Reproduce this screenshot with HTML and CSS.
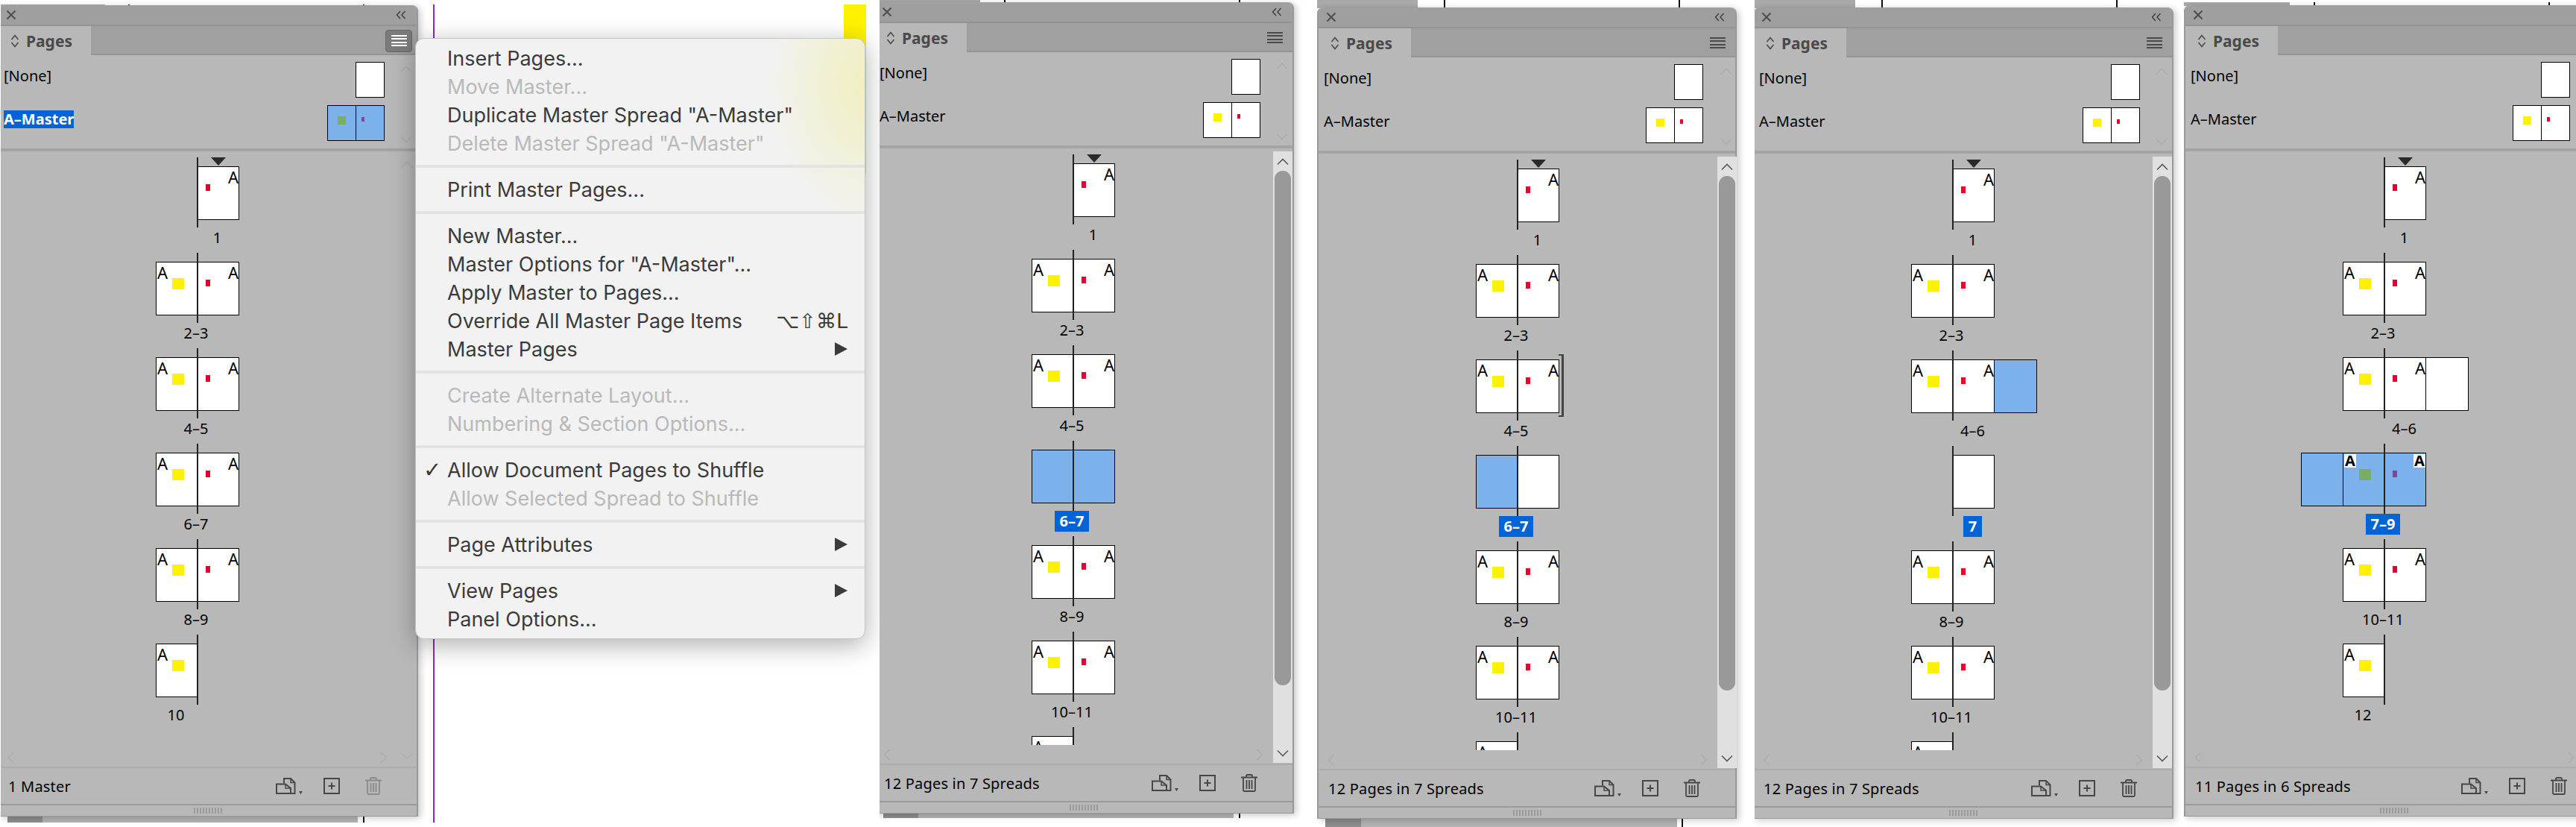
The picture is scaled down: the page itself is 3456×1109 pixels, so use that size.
FILE: index.html
```html
<!DOCTYPE html>
<html>
<head>
  <meta charset="utf-8" />
  <title>Pages panel</title>
  <link rel="stylesheet" href="styles.css">
</head>
<body>
  <svg class="sprite" xmlns="http://www.w3.org/2000/svg">
    <symbol id="i-close" viewBox="0 0 14 14"><path d="M1.5 1.5 12.5 12.5M12.5 1.5 1.5 12.5" fill="none" stroke="currentColor" stroke-width="2"/></symbol>
    <symbol id="i-collapse" viewBox="0 0 14 12"><path d="M6 1 1.500 6 6 11M12.500 1 8 6 12.500 11" fill="none" stroke="currentColor" stroke-width="1.400"/></symbol>
    <symbol id="i-updown" viewBox="0 0 12 18"><path d="M1.500 7 6 1.500 10.500 7M1.500 11 6 16.500 10.500 11" fill="none" stroke="currentColor" stroke-width="1.600"/></symbol>
    <symbol id="i-up" viewBox="0 0 16 10"><path d="M1 8.500 8 1.500 15 8.500" fill="none" stroke="currentColor" stroke-width="1.600"/></symbol>
    <symbol id="i-down" viewBox="0 0 16 10"><path d="M1 1.500 8 8.500 15 1.500" fill="none" stroke="currentColor" stroke-width="1.600"/></symbol>
    <symbol id="i-left" viewBox="0 0 10 16"><path d="M8.500 1 1.500 8 8.500 15" fill="none" stroke="currentColor" stroke-width="1.600"/></symbol>
    <symbol id="i-right" viewBox="0 0 10 16"><path d="M1.500 1 8.500 8 1.500 15" fill="none" stroke="currentColor" stroke-width="1.600"/></symbol>
    <symbol id="i-dup" viewBox="0 0 36 22">
      <path d="M11 7.500V1H20L25.500 6.500V21H20" fill="none" stroke="currentColor" stroke-width="2"/>
      <path d="M20 1V6.500H25.500" fill="none" stroke="currentColor" stroke-width="1.500"/>
      <path d="M1 8.500H13L20 14V21H1Z" fill="none" stroke="currentColor" stroke-width="2"/>
      <path d="M13 8.500V14H20" fill="none" stroke="currentColor" stroke-width="1.500"/>
      <path d="M31 18H36L33.500 22Z" fill="currentColor"/>
    </symbol>
    <symbol id="i-new" viewBox="0 0 22 22">
      <rect x="1" y="1" width="20" height="20" fill="none" stroke="currentColor" stroke-width="2"/>
      <path d="M11 6.500V15.500M6.500 11H15.500" fill="none" stroke="currentColor" stroke-width="2"/>
    </symbol>
    <symbol id="i-trash" viewBox="0 0 22 24">
      <path d="M0 4.500H22M7 4V2.500Q7 1 8.500 1H13.500Q15 1 15 2.500V4M3 5V21.500Q3 23 4.500 23H17.500Q19 23 19 21.500V5M7.500 8V20M11 8V20M14.500 8V20" fill="none" stroke="currentColor" stroke-width="1.800"/>
    </symbol>
  </svg>

  <!-- first screenshot: panel with the flyout menu open -->
  <section class="shot shot-1">
    <i class="back-tab"></i><i class="tick tick-a"></i><i class="tick tick-b"></i>
    <i class="guide"></i><i class="swatch"></i>
    <i class="under"></i><i class="under-icon"></i><i class="under-line"></i>

    <div class="panel">
      <div class="title-bar">
        <svg class="ic-close"><use href="#i-close"/></svg>
        <svg class="ic-collapse"><use href="#i-collapse"/></svg>
      </div>
      <div class="tab-bar">
        <div class="tab"><svg class="ic-updown"><use href="#i-updown"/></svg>Pages</div>
        <div class="burger on"><i></i><i></i><i></i><i></i></div>
      </div>
      <div class="masters">
        <div class="master"><span class="name">[None]</span><div class="thumb one"></div></div>
        <div class="master"><span class="name sel">A–Master</span><div class="thumb two sel-blue"><i class="t-line"></i><i class="t-yel"></i><i class="t-red"></i></div></div>
        <svg class="fade-up"><use href="#i-up"/></svg><svg class="fade-down"><use href="#i-down"/></svg>
      </div>
      <div class="body">
        <div class="list">
          <div class="spread">
            <div class="leaves"><div class="side left"></div><i class="spine"></i><div class="side"><div class="page"><i class="current"></i><span class="tag right">A</span><i class="red"></i></div></div></div>
            <div class="label at-r"><span>1</span></div>
          </div>
          <div class="spread">
            <div class="leaves"><div class="side left"><div class="page"><span class="tag">A</span><i class="yel"></i></div></div><i class="spine"></i><div class="side"><div class="page"><span class="tag right">A</span><i class="red"></i></div></div></div>
            <div class="label at-m"><span>2–3</span></div>
          </div>
          <div class="spread">
            <div class="leaves"><div class="side left"><div class="page"><span class="tag">A</span><i class="yel"></i></div></div><i class="spine"></i><div class="side"><div class="page"><span class="tag right">A</span><i class="red"></i></div></div></div>
            <div class="label at-m"><span>4–5</span></div>
          </div>
          <div class="spread">
            <div class="leaves"><div class="side left"><div class="page"><span class="tag">A</span><i class="yel"></i></div></div><i class="spine"></i><div class="side"><div class="page"><span class="tag right">A</span><i class="red"></i></div></div></div>
            <div class="label at-m"><span>6–7</span></div>
          </div>
          <div class="spread">
            <div class="leaves"><div class="side left"><div class="page"><span class="tag">A</span><i class="yel"></i></div></div><i class="spine"></i><div class="side"><div class="page"><span class="tag right">A</span><i class="red"></i></div></div></div>
            <div class="label at-m"><span>8–9</span></div>
          </div>
          <div class="spread">
            <div class="leaves"><div class="side left"><div class="page"><span class="tag">A</span><i class="yel"></i></div></div><i class="spine"></i><div class="side"></div></div>
            <div class="label at-l"><span>10</span></div>
          </div>
        </div>
        <div class="hbar"><svg class="ic-side"><use href="#i-left"/></svg><svg class="ic-side"><use href="#i-right"/></svg></div>
        <div class="scroll idle"><svg class="ic-chev"><use href="#i-up"/></svg><svg class="ic-chev"><use href="#i-down"/></svg></div>
      </div>
      <div class="foot">
        <span class="status">1 Master</span>
        <div class="tools"><svg class="ic-dup"><use href="#i-dup"/></svg><svg class="ic-new"><use href="#i-new"/></svg><svg class="ic-trash off"><use href="#i-trash"/></svg></div>
      </div>
      <div class="grip"></div>
    </div>

    <div class="menu">
      <div class="item"><span></span><span>Insert Pages...</span></div>
      <div class="item off"><span></span><span>Move Master...</span></div>
      <div class="item"><span></span><span>Duplicate Master Spread "A-Master"</span></div>
      <div class="item off"><span></span><span>Delete Master Spread "A-Master"</span></div>
      <div class="sep"></div>
      <div class="item"><span></span><span>Print Master Pages...</span></div>
      <div class="sep"></div>
      <div class="item"><span></span><span>New Master...</span></div>
      <div class="item"><span></span><span>Master Options for "A-Master"...</span></div>
      <div class="item"><span></span><span>Apply Master to Pages...</span></div>
      <div class="item"><span></span><span>Override All Master Page Items</span><span class="keys">⌥⇧⌘L</span></div>
      <div class="item"><span></span><span>Master Pages</span><i class="arrow"></i></div>
      <div class="sep"></div>
      <div class="item off"><span></span><span>Create Alternate Layout...</span></div>
      <div class="item off"><span></span><span>Numbering &amp; Section Options...</span></div>
      <div class="sep"></div>
      <div class="item"><span class="check">✓</span><span>Allow Document Pages to Shuffle</span></div>
      <div class="item off"><span></span><span>Allow Selected Spread to Shuffle</span></div>
      <div class="sep"></div>
      <div class="item"><span></span><span>Page Attributes</span><i class="arrow"></i></div>
      <div class="sep"></div>
      <div class="item"><span></span><span>View Pages</span><i class="arrow"></i></div>
      <div class="item"><span></span><span>Panel Options...</span></div>
    </div>
  </section>

  <!-- second screenshot: spread 6-7 selected -->
  <section class="shot shot-2">
    <i class="back-tab"></i><i class="tick tick-a"></i><i class="tick tick-b"></i>
    <i class="under"></i><i class="under-icon"></i><i class="under-line"></i>
    <div class="panel">
      <div class="title-bar">
        <svg class="ic-close"><use href="#i-close"/></svg>
        <svg class="ic-collapse"><use href="#i-collapse"/></svg>
      </div>
      <div class="tab-bar">
        <div class="tab"><svg class="ic-updown"><use href="#i-updown"/></svg>Pages</div>
        <div class="burger"><i></i><i></i><i></i><i></i></div>
      </div>
      <div class="masters">
        <div class="master"><span class="name">[None]</span><div class="thumb one"></div></div>
        <div class="master"><span class="name">A–Master</span><div class="thumb two"><i class="t-line"></i><i class="t-yel"></i><i class="t-red"></i></div></div>
        <svg class="fade-up"><use href="#i-up"/></svg><svg class="fade-down"><use href="#i-down"/></svg>
      </div>
      <div class="body">
        <div class="list">
          <div class="spread">
            <div class="leaves"><div class="side left"></div><i class="spine"></i><div class="side"><div class="page"><i class="current"></i><span class="tag right">A</span><i class="red"></i></div></div></div>
            <div class="label at-r"><span>1</span></div>
          </div>
          <div class="spread">
            <div class="leaves"><div class="side left"><div class="page"><span class="tag">A</span><i class="yel"></i></div></div><i class="spine"></i><div class="side"><div class="page"><span class="tag right">A</span><i class="red"></i></div></div></div>
            <div class="label at-m"><span>2–3</span></div>
          </div>
          <div class="spread">
            <div class="leaves"><div class="side left"><div class="page"><span class="tag">A</span><i class="yel"></i></div></div><i class="spine"></i><div class="side"><div class="page"><span class="tag right">A</span><i class="red"></i></div></div></div>
            <div class="label at-m"><span>4–5</span></div>
          </div>
          <div class="spread">
            <div class="leaves"><div class="side left"><div class="page blue"></div></div><i class="spine"></i><div class="side"><div class="page blue"></div></div></div>
            <div class="label at-m"><span class="hit">6–7</span></div>
          </div>
          <div class="spread">
            <div class="leaves"><div class="side left"><div class="page"><span class="tag">A</span><i class="yel"></i></div></div><i class="spine"></i><div class="side"><div class="page"><span class="tag right">A</span><i class="red"></i></div></div></div>
            <div class="label at-m"><span>8–9</span></div>
          </div>
          <div class="spread">
            <div class="leaves"><div class="side left"><div class="page"><span class="tag">A</span><i class="yel"></i></div></div><i class="spine"></i><div class="side"><div class="page"><span class="tag right">A</span><i class="red"></i></div></div></div>
            <div class="label at-m"><span>10–11</span></div>
          </div>
          <div class="spread">
            <div class="leaves"><div class="side left"><div class="page"><span class="tag">A</span><i class="yel"></i></div></div><i class="spine"></i><div class="side"></div></div>
          </div>
        </div>
        <div class="hbar"><svg class="ic-side"><use href="#i-left"/></svg><svg class="ic-side"><use href="#i-right"/></svg></div>
        <div class="scroll"><svg class="ic-chev"><use href="#i-up"/></svg><i class="thumb-bar"></i><svg class="ic-chev"><use href="#i-down"/></svg></div>
      </div>
      <div class="foot">
        <span class="status">12 Pages in 7 Spreads</span>
        <div class="tools"><svg class="ic-dup"><use href="#i-dup"/></svg><svg class="ic-new"><use href="#i-new"/></svg><svg class="ic-trash"><use href="#i-trash"/></svg></div>
      </div>
      <div class="grip"></div>
    </div>
  </section>

  <!-- third screenshot: dragging page 6 next to 4-5 -->
  <section class="shot shot-3">
    <i class="back-tab"></i><i class="tick tick-a"></i><i class="tick tick-b"></i>
    <i class="under"></i><i class="under-icon"></i><i class="under-line"></i>
    <div class="panel">
      <div class="title-bar">
        <svg class="ic-close"><use href="#i-close"/></svg>
        <svg class="ic-collapse"><use href="#i-collapse"/></svg>
      </div>
      <div class="tab-bar">
        <div class="tab"><svg class="ic-updown"><use href="#i-updown"/></svg>Pages</div>
        <div class="burger"><i></i><i></i><i></i><i></i></div>
      </div>
      <div class="masters">
        <div class="master"><span class="name">[None]</span><div class="thumb one"></div></div>
        <div class="master"><span class="name">A–Master</span><div class="thumb two"><i class="t-line"></i><i class="t-yel"></i><i class="t-red"></i></div></div>
        <svg class="fade-up"><use href="#i-up"/></svg><svg class="fade-down"><use href="#i-down"/></svg>
      </div>
      <div class="body">
        <div class="list">
          <div class="spread">
            <div class="leaves"><div class="side left"></div><i class="spine"></i><div class="side"><div class="page"><i class="current"></i><span class="tag right">A</span><i class="red"></i></div></div></div>
            <div class="label at-r"><span>1</span></div>
          </div>
          <div class="spread">
            <div class="leaves"><div class="side left"><div class="page"><span class="tag">A</span><i class="yel"></i></div></div><i class="spine"></i><div class="side"><div class="page"><span class="tag right">A</span><i class="red"></i></div></div></div>
            <div class="label at-m"><span>2–3</span></div>
          </div>
          <div class="spread">
            <div class="leaves"><div class="side left"><div class="page"><span class="tag">A</span><i class="yel"></i></div></div><i class="spine"></i><div class="side"><div class="page"><span class="tag right">A</span><i class="red"></i><i class="bracket"></i></div></div></div>
            <div class="label at-m"><span>4–5</span></div>
          </div>
          <div class="spread">
            <div class="leaves"><div class="side left"><div class="page blue"></div></div><i class="spine"></i><div class="side"><div class="page"></div></div></div>
            <div class="label at-m"><span class="hit">6–7</span></div>
          </div>
          <div class="spread">
            <div class="leaves"><div class="side left"><div class="page"><span class="tag">A</span><i class="yel"></i></div></div><i class="spine"></i><div class="side"><div class="page"><span class="tag right">A</span><i class="red"></i></div></div></div>
            <div class="label at-m"><span>8–9</span></div>
          </div>
          <div class="spread">
            <div class="leaves"><div class="side left"><div class="page"><span class="tag">A</span><i class="yel"></i></div></div><i class="spine"></i><div class="side"><div class="page"><span class="tag right">A</span><i class="red"></i></div></div></div>
            <div class="label at-m"><span>10–11</span></div>
          </div>
          <div class="spread">
            <div class="leaves"><div class="side left"><div class="page"><span class="tag">A</span><i class="yel"></i></div></div><i class="spine"></i><div class="side"></div></div>
          </div>
        </div>
        <div class="hbar"><svg class="ic-side"><use href="#i-left"/></svg><svg class="ic-side"><use href="#i-right"/></svg></div>
        <div class="scroll"><svg class="ic-chev"><use href="#i-up"/></svg><i class="thumb-bar"></i><svg class="ic-chev"><use href="#i-down"/></svg></div>
      </div>
      <div class="foot">
        <span class="status">12 Pages in 7 Spreads</span>
        <div class="tools"><svg class="ic-dup"><use href="#i-dup"/></svg><svg class="ic-new"><use href="#i-new"/></svg><svg class="ic-trash"><use href="#i-trash"/></svg></div>
      </div>
      <div class="grip"></div>
    </div>
  </section>

  <!-- fourth screenshot: page 6 joined to the 4-6 spread -->
  <section class="shot shot-4">
    <i class="back-tab"></i><i class="tick tick-a"></i><i class="tick tick-b"></i>
    <div class="panel">
      <div class="title-bar">
        <svg class="ic-close"><use href="#i-close"/></svg>
        <svg class="ic-collapse"><use href="#i-collapse"/></svg>
      </div>
      <div class="tab-bar">
        <div class="tab"><svg class="ic-updown"><use href="#i-updown"/></svg>Pages</div>
        <div class="burger"><i></i><i></i><i></i><i></i></div>
      </div>
      <div class="masters">
        <div class="master"><span class="name">[None]</span><div class="thumb one"></div></div>
        <div class="master"><span class="name">A–Master</span><div class="thumb two"><i class="t-line"></i><i class="t-yel"></i><i class="t-red"></i></div></div>
        <svg class="fade-up"><use href="#i-up"/></svg><svg class="fade-down"><use href="#i-down"/></svg>
      </div>
      <div class="body">
        <div class="list">
          <div class="spread">
            <div class="leaves"><div class="side left"></div><i class="spine"></i><div class="side"><div class="page"><i class="current"></i><span class="tag right">A</span><i class="red"></i></div></div></div>
            <div class="label at-r"><span>1</span></div>
          </div>
          <div class="spread">
            <div class="leaves"><div class="side left"><div class="page"><span class="tag">A</span><i class="yel"></i></div></div><i class="spine"></i><div class="side"><div class="page"><span class="tag right">A</span><i class="red"></i></div></div></div>
            <div class="label at-m"><span>2–3</span></div>
          </div>
          <div class="spread">
            <div class="leaves"><div class="side left"><div class="page"><span class="tag">A</span><i class="yel"></i></div></div><i class="spine"></i><div class="side"><div class="page"><span class="tag right">A</span><i class="red"></i></div><div class="page extra blue"></div></div></div>
            <div class="label at-r"><span>4–6</span></div>
          </div>
          <div class="spread">
            <div class="leaves"><div class="side left"></div><i class="spine"></i><div class="side"><div class="page"></div></div></div>
            <div class="label at-r"><span class="hit">7</span></div>
          </div>
          <div class="spread">
            <div class="leaves"><div class="side left"><div class="page"><span class="tag">A</span><i class="yel"></i></div></div><i class="spine"></i><div class="side"><div class="page"><span class="tag right">A</span><i class="red"></i></div></div></div>
            <div class="label at-m"><span>8–9</span></div>
          </div>
          <div class="spread">
            <div class="leaves"><div class="side left"><div class="page"><span class="tag">A</span><i class="yel"></i></div></div><i class="spine"></i><div class="side"><div class="page"><span class="tag right">A</span><i class="red"></i></div></div></div>
            <div class="label at-m"><span>10–11</span></div>
          </div>
          <div class="spread">
            <div class="leaves"><div class="side left"><div class="page"><span class="tag">A</span><i class="yel"></i></div></div><i class="spine"></i><div class="side"></div></div>
          </div>
        </div>
        <div class="hbar"><svg class="ic-side"><use href="#i-left"/></svg><svg class="ic-side"><use href="#i-right"/></svg></div>
        <div class="scroll"><svg class="ic-chev"><use href="#i-up"/></svg><i class="thumb-bar"></i><svg class="ic-chev"><use href="#i-down"/></svg></div>
      </div>
      <div class="foot">
        <span class="status">12 Pages in 7 Spreads</span>
        <div class="tools"><svg class="ic-dup"><use href="#i-dup"/></svg><svg class="ic-new"><use href="#i-new"/></svg><svg class="ic-trash"><use href="#i-trash"/></svg></div>
      </div>
      <div class="grip"></div>
    </div>
  </section>

  <!-- fifth screenshot: 7-9 as a three page spread -->
  <section class="shot shot-5">
    <i class="back-tab"></i><i class="tick tick-a"></i><i class="tick tick-b"></i>
    <div class="panel">
      <div class="title-bar">
        <svg class="ic-close"><use href="#i-close"/></svg>
        <svg class="ic-collapse"><use href="#i-collapse"/></svg>
      </div>
      <div class="tab-bar">
        <div class="tab"><svg class="ic-updown"><use href="#i-updown"/></svg>Pages</div>
        <div class="burger"><i></i><i></i><i></i><i></i></div>
      </div>
      <div class="masters">
        <div class="master"><span class="name">[None]</span><div class="thumb one"></div></div>
        <div class="master"><span class="name">A–Master</span><div class="thumb two"><i class="t-line"></i><i class="t-yel"></i><i class="t-red"></i></div></div>
      </div>
      <div class="body">
        <div class="list">
          <div class="spread">
            <div class="leaves"><div class="side left"></div><i class="spine"></i><div class="side"><div class="page"><i class="current"></i><span class="tag right">A</span><i class="red"></i></div></div></div>
            <div class="label at-r"><span>1</span></div>
          </div>
          <div class="spread">
            <div class="leaves"><div class="side left"><div class="page"><span class="tag">A</span><i class="yel"></i></div></div><i class="spine"></i><div class="side"><div class="page"><span class="tag right">A</span><i class="red"></i></div></div></div>
            <div class="label at-m"><span>2–3</span></div>
          </div>
          <div class="spread">
            <div class="leaves"><div class="side left"><div class="page"><span class="tag">A</span><i class="yel"></i></div></div><i class="spine"></i><div class="side"><div class="page"><span class="tag right">A</span><i class="red"></i></div><div class="page extra"></div></div></div>
            <div class="label at-r"><span>4–6</span></div>
          </div>
          <div class="spread">
            <div class="leaves"><div class="side left"><div class="page extra-l blue"></div><div class="page blue"><span class="tag boxed">A</span><i class="yel green"></i></div></div><i class="spine"></i><div class="side"><div class="page blue"><span class="tag right boxed">A</span><i class="red purple"></i></div></div></div>
            <div class="label at-m"><span class="hit">7–9</span></div>
          </div>
          <div class="spread">
            <div class="leaves"><div class="side left"><div class="page"><span class="tag">A</span><i class="yel"></i></div></div><i class="spine"></i><div class="side"><div class="page"><span class="tag right">A</span><i class="red"></i></div></div></div>
            <div class="label at-m"><span>10–11</span></div>
          </div>
          <div class="spread">
            <div class="leaves"><div class="side left"><div class="page"><span class="tag">A</span><i class="yel"></i></div></div><i class="spine"></i><div class="side"></div></div>
            <div class="label at-l"><span>12</span></div>
          </div>
        </div>
        <div class="hbar"><svg class="ic-side"><use href="#i-left"/></svg><svg class="ic-side"><use href="#i-right"/></svg></div>
        <div class="scroll idle"></div>
      </div>
      <div class="foot">
        <span class="status">11 Pages in 6 Spreads</span>
        <div class="tools"><svg class="ic-dup"><use href="#i-dup"/></svg><svg class="ic-new"><use href="#i-new"/></svg><svg class="ic-trash"><use href="#i-trash"/></svg></div>
      </div>
      <div class="grip"></div>
    </div>
  </section>
</body>
</html>
```

FILE: styles.css
```css
html, body {
  margin: 0;
  background: #fff;
}
body {
  position: relative;
  width: 3456px;
  height: 1109px;
  overflow: hidden;
  font-family: "Noto Sans", sans-serif;
  font-size: 20px;
  color: #000;
}
.sprite {
  position: absolute;
  width: 0;
  height: 0;
}
i {
  display: block;
}

/* each screenshot is cropped on its own */
.shot {
  position: absolute;
  top: 0;
  height: 1109px;
  overflow: hidden;
  background: #fff;
}
.shot-1 { left: 1px; width: 1179px; }
.shot-2 { left: 1180px; width: 587px; }
.shot-3 { left: 1767px; width: 587px; }
.shot-4 { left: 2354px; width: 576px; }
.shot-5 { left: 2930px; width: 526px; }

.panel {
  position: absolute;
  width: 563px;
  height: 1088px;
  box-sizing: border-box;
  display: flex;
  flex-direction: column;
  background: #b8b8b8;
  border-right: 2px solid #999;
  border-bottom: 1px solid #999;
  border-radius: 8px 8px 0 0;
  box-shadow: 3px 2px 10px rgba(0, 0, 0, 0.22);
}
.shot-1 .panel { left: -3px; top: 7px; }
.shot-2 .panel { left: -7px; top: 3px; }
.shot-3 .panel { left: 0; top: 10px; border-left: 2px solid #999; width: 563px; }
.shot-4 .panel { left: -1px; top: 10px; }
.shot-5 .panel { left: 0; top: 7px; border-left: 2px solid #999; }

/* bits of the document behind the panel */
.back-tab {
  position: absolute;
  left: 0;
  width: 140px;
  background: #a9a9a9;
}
.tick {
  position: absolute;
  width: 2px;
  background: #111;
}
.shot-1 .back-tab { top: 6px; height: 2px; }
.shot-1 .tick { top: 6px; height: 2px; }
.shot-1 .tick-a { left: 171px; }
.shot-1 .tick-b { left: 486px; }
.shot-2 .back-tab { top: 0; height: 4px; width: 135px; }
.shot-2 .tick { top: 0; height: 4px; }
.shot-2 .tick-a { left: 167px; }
.shot-2 .tick-b { left: 482px; }
.shot-3 .back-tab { top: 0; height: 11px; width: 135px; }
.shot-3 .tick { top: 0; height: 11px; }
.shot-3 .tick-a { left: 170px; }
.shot-3 .tick-b { left: 485px; }
.shot-4 .back-tab { top: 0; height: 11px; width: 135px; }
.shot-4 .tick { top: 0; height: 11px; }
.shot-4 .tick-a { left: 170px; }
.shot-4 .tick-b { left: 485px; }
.shot-5 .back-tab { top: 3px; height: 5px; width: 142px; }
.shot-5 .tick { top: 3px; height: 5px; }
.shot-5 .tick-a { left: 174px; }
.shot-5 .tick-b { left: 489px; }

.guide {
  position: absolute;
  left: 580px;
  top: 6px;
  width: 1.500px;
  height: 1097px;
  background: #8a2bc4;
}
.swatch {
  position: absolute;
  left: 1131px;
  top: 6px;
  width: 30px;
  height: 228px;
  background: #fff200;
}
.under {
  position: absolute;
  height: 14px;
  background: #b3b3b3;
}
.under-icon {
  position: absolute;
  height: 14px;
  background: #8d8d8d;
}
.under-line {
  position: absolute;
  width: 2px;
  height: 14px;
  background: #111;
}
.shot-1 .under { left: 56px; width: 423px; top: 1095px; height: 8px; }
.shot-1 .under-icon { left: 9px; width: 47px; top: 1095px; height: 8px; }
.shot-1 .under-line { left: 486px; top: 1095px; height: 8px; }
.shot-2 .under { left: 52px; width: 423px; top: 1091px; height: 6px; }
.shot-2 .under-icon { left: 5px; width: 47px; top: 1091px; height: 6px; }
.shot-2 .under-line { left: 482px; top: 1091px; height: 6px; }
.shot-3 .under { left: 59px; width: 424px; top: 1098px; height: 11px; }
.shot-3 .under-icon { left: 11px; width: 48px; top: 1098px; height: 11px; }
.shot-3 .under-line { left: 489px; top: 1098px; height: 11px; }

/* panel chrome */
.title-bar {
  flex: none;
  height: 26px;
  display: flex;
  align-items: center;
  justify-content: space-between;
  padding: 0 14px 0 10px;
  background: #9f9f9f;
  border-bottom: 2px solid #929292;
  border-radius: 8px 8px 0 0;
  color: #4d4d4d;
}
.ic-close { width: 14px; height: 14px; }
.ic-collapse { width: 14px; height: 12px; color: #3c3c3c; }
.tab-bar {
  flex: none;
  height: 39px;
  display: flex;
  justify-content: space-between;
  background: #a0a0a0;
  border-bottom: 0;
  box-shadow: inset 0 -2px 0 #949494;
  color: #4a4a4a;
}
.tab {
  width: 124px;
  display: flex;
  align-items: center;
  gap: 9px;
  padding-left: 16px;
  box-sizing: border-box;
  background: #b8b8b8;
  font-size: 21px;
  font-weight: 700;
}
.ic-updown { width: 12px; height: 18px; }
.burger {
  align-self: center;
  width: 36px;
  height: 30px;
  margin-right: 6px;
  box-sizing: border-box;
  display: flex;
  flex-direction: column;
  justify-content: center;
  align-items: center;
  gap: 2.500px;
  border-radius: 4px;
}
.burger i {
  width: 21px;
  height: 1.800px;
  background: #4a4a4a;
}
.burger.on {
  background: #7b7b7b;
  border: 1px solid #666;
}
.burger.on i {
  background: #fff;
}
.masters {
  flex: none;
  position: relative;
  height: 129px;
  box-sizing: border-box;
  padding: 9px 43px 0 7px;
  display: flex;
  flex-direction: column;
  gap: 10px;
  border-bottom: 4px solid #a4a4a4;
}
.master {
  height: 48px;
  display: flex;
  justify-content: space-between;
  align-items: flex-start;
}
.name {
  margin-top: 7px;
  line-height: 24px;
}
.name.sel {
  background: #0063d6;
  color: #fff;
  font-weight: 700;
}
.thumb {
  position: relative;
  height: 48px;
  box-sizing: border-box;
  background: #fff;
  border: 1px solid #000;
}
.thumb.one { width: 39px; }
.thumb.two { width: 77px; }
.thumb.sel-blue { background: #7cb1ec; }
.t-line {
  position: absolute;
  left: 37px;
  top: 0;
  width: 1px;
  height: 46px;
  background: #000;
}
.t-yel {
  position: absolute;
  left: 13px;
  top: 14px;
  width: 11px;
  height: 11px;
  background: #fff200;
}
.t-red {
  position: absolute;
  left: 45px;
  top: 15px;
  width: 4px;
  height: 6px;
  background: #e4002b;
}
.sel-blue .t-yel { background: #79ad63; }
.sel-blue .t-red { background: #7a4a9a; }
.fade-up, .fade-down {
  position: absolute;
  left: 539px;
  width: 16px;
  height: 10px;
  color: #adadad;
}
.fade-up { top: 14px; }
.fade-down { top: 108px; }

/* page list with its scrollbars */
.body {
  flex: none;
  display: grid;
  grid-template-columns: 535px 26px;
  grid-template-rows: 800px 25px;
  height: 825px;
}
.list {
  overflow: hidden;
  padding-top: 8px;
  box-sizing: border-box;
}
.spread {
  height: 128px;
  position: relative;
}
.leaves {
  display: flex;
  height: 94px;
}
.side {
  display: flex;
  margin-top: 12px;
  height: 72px;
}
.side.left {
  width: 267px;
  flex: none;
  justify-content: flex-end;
}
.spine {
  position: relative;
  z-index: 1;
  flex: none;
  width: 2px;
  height: 94px;
  margin: 0 -1px;
  background: #222;
}
.page {
  position: relative;
  flex: none;
  width: 56px;
  height: 72px;
  box-sizing: border-box;
  background: #fff;
  border: 1px solid #000;
}
.page.blue {
  background: #7cb1ec;
}
.page.extra {
  width: 58px;
  margin-left: -1px;
}
.page.extra-l {
  width: 57px;
  margin-right: -1px;
}
.tag {
  position: absolute;
  left: 1px;
  top: 1px;
  font-size: 22px;
  line-height: 24px;
}
.tag.right {
  left: auto;
  right: 0;
}
.tag.boxed {
  top: 1px;
  width: 16px;
  height: 18px;
  background: #fff;
  font-weight: 700;
  font-size: 20px;
  line-height: 18px;
  text-align: center;
}
.yel {
  position: absolute;
  left: 21px;
  top: 21px;
  width: 16px;
  height: 15px;
  background: #fff200;
}
.red {
  position: absolute;
  left: 10px;
  top: 23px;
  width: 6px;
  height: 9px;
  background: #e4002b;
}
.green { background: #79ad63; }
.purple { background: #7a4a9a; }
.current {
  position: absolute;
  left: 17px;
  top: -13px;
  width: 0;
  height: 0;
  border-left: 10px solid transparent;
  border-right: 10px solid transparent;
  border-top: 11px solid #2a2a2a;
}
.bracket {
  position: absolute;
  left: 100%;
  top: -8px;
  width: 7px;
  height: 84px;
  box-sizing: border-box;
  border: solid #444;
  border-width: 2px 3px 2px 0;
}
.label {
  display: flex;
  justify-content: center;
  height: 28px;
  line-height: 28px;
}
.label.at-l { width: 476px; }
.label.at-m { width: 530px; }
.label.at-r { width: 587px; }
.hit {
  padding: 0 6.500px;
  background: #0063d6;
  color: #fff;
  font-weight: 700;
}
.hbar {
  display: flex;
  justify-content: space-between;
  align-items: center;
  padding: 0 13px 0 12px;
  color: #adadad;
}
.ic-side { width: 10px; height: 16px; }
.scroll {
  grid-column: 2;
  grid-row: 1 / span 2;
  margin: 4px 0 1px;
  display: flex;
  flex-direction: column;
  justify-content: space-between;
  align-items: center;
  background: #e0e0e0;
  color: #5a5a5a;
  padding: 9px 0 8px;
}
.ic-chev { width: 16px; height: 10px; flex: none; }
.thumb-bar {
  flex: none;
  width: 22px;
  height: 690px;
  margin: 7px 0 auto;
  background: #999;
  border-radius: 11px;
}
.scroll .ic-chev:last-child { margin-top: auto; }
.scroll.idle {
  background: none;
  color: #adadad;
}

/* footer */
.foot {
  flex: none;
  height: 52px;
  box-sizing: border-box;
  display: flex;
  align-items: center;
  justify-content: space-between;
  padding: 0 47px 0 13px;
  border-top: 2px solid #adadad;
  border-bottom: 2px solid #9a9a9a;
}
.status {
  letter-spacing: 0.200px;
}
.tools {
  display: flex;
  align-items: center;
  gap: 28px;
  color: #474747;
}
.ic-dup { width: 36px; height: 22px; }
.ic-new { width: 22px; height: 22px; }
.ic-trash { width: 22px; height: 24px; margin-left: 6px; }
.ic-trash.off { color: #8c8c8c; }
.grip {
  flex: none;
  height: 14px;
  background: repeating-linear-gradient(to right, #9b9b9b 0 2px, transparent 2px 4px) center / 38px 8px no-repeat;
}

/* flyout menu */
.menu {
  position: absolute;
  z-index: 5;
  left: 556px;
  top: 51px;
  width: 604px;
  height: 806px;
  box-sizing: border-box;
  padding: 7px 0 9px;
  border: 1px solid #c6c6c6;
  border-radius: 12px;
  background:
    radial-gradient(ellipse 130px 190px at 100% 60px, rgba(240, 238, 170, 0.7), rgba(242, 242, 242, 0)) no-repeat,
    #f2f2f2;
  box-shadow: 0 8px 34px rgba(0, 0, 0, 0.32);
  font-family: Inter, sans-serif;
  font-size: 27px;
  color: #3b3b3b;
}
.item {
  height: 38px;
  display: grid;
  grid-template-columns: 42px 1fr auto;
  align-items: center;
  padding-right: 23px;
  white-space: nowrap;
}
.item.off {
  color: #b9b9b9;
}
.check {
  padding-left: 10px;
  font-family: "DejaVu Sans", sans-serif;
  font-weight: 700;
  font-size: 29px;
}
.keys {
  font-family: "DejaVu Sans", sans-serif;
  font-size: 27px;
}
.arrow {
  width: 0;
  height: 0;
  border-left: 17px solid #3b3b3b;
  border-top: 9.500px solid transparent;
  border-bottom: 9.500px solid transparent;
}
.sep {
  height: 24px;
  display: flex;
  align-items: center;
}
.sep::before {
  content: "";
  width: 100%;
  height: 4px;
  background: #e3e3e3;
}
```
